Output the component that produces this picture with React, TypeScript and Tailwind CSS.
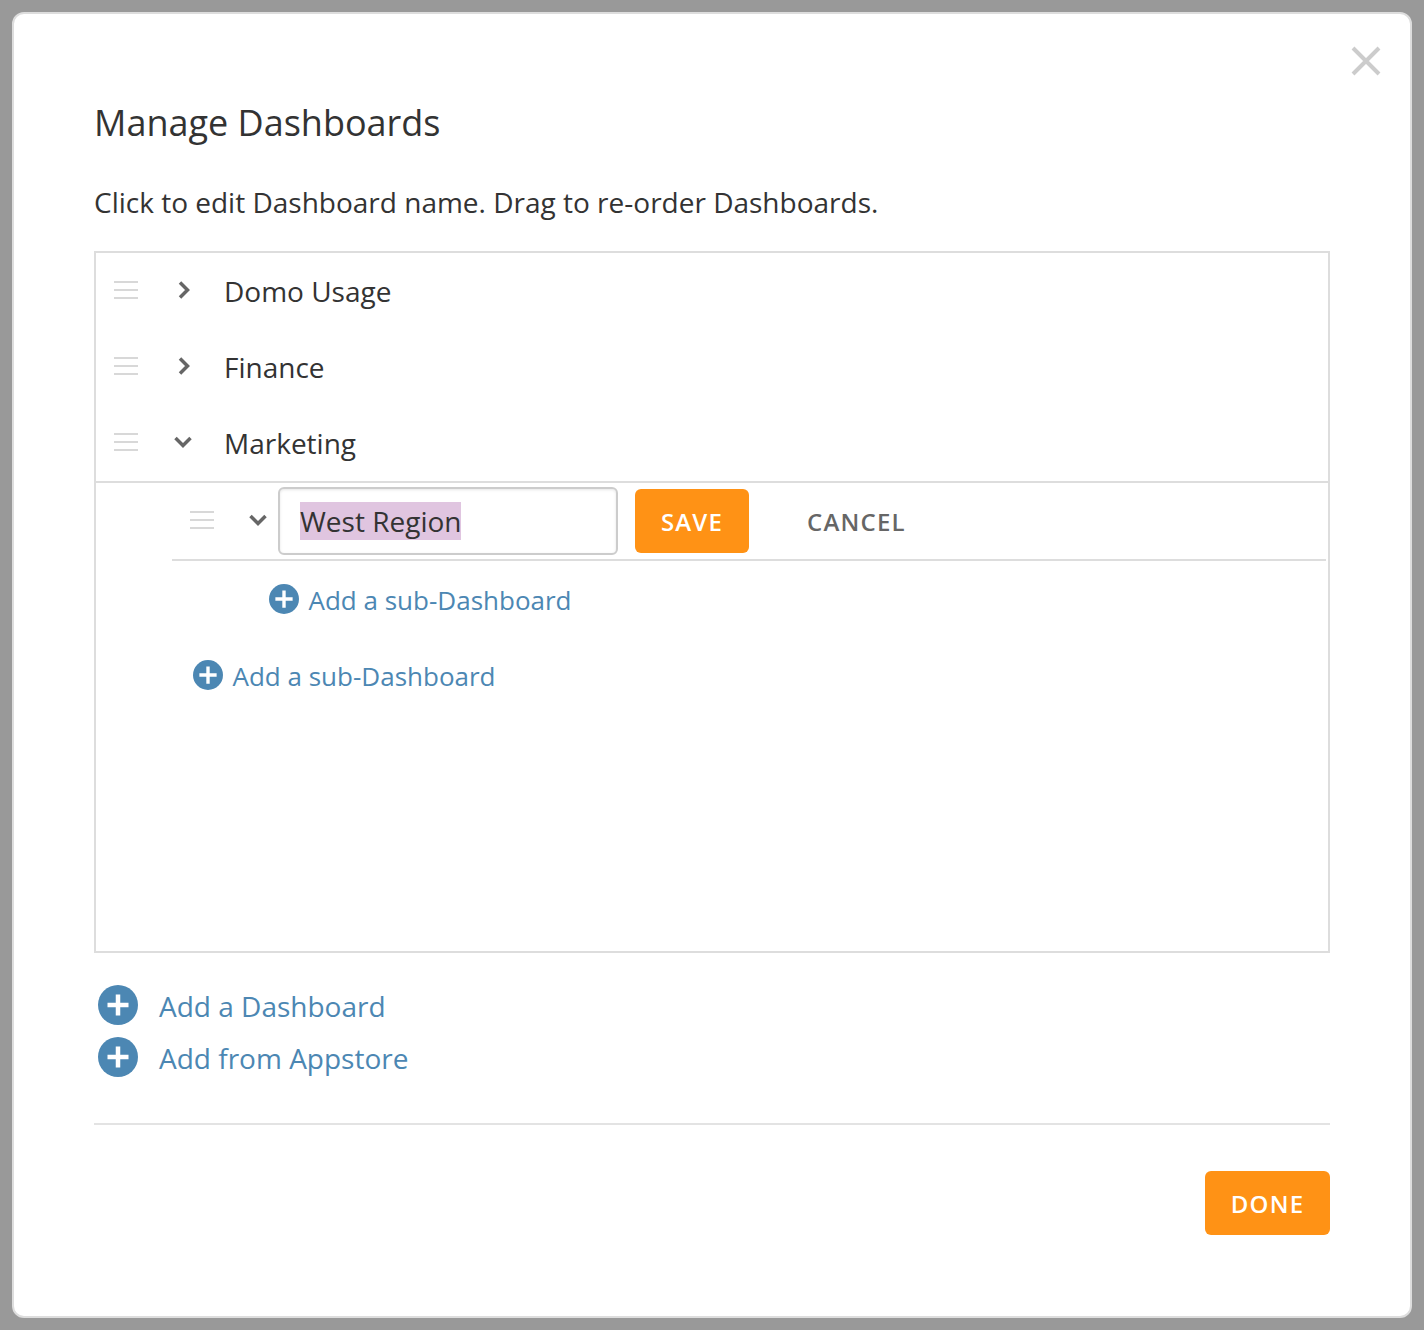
const font = { fontFamily: '"Open Sans", sans-serif' };

function Handle() {
  return (
    <div className="flex w-6 flex-col gap-1.5">
      <div className="h-0.5 bg-[#d8d8d8]" />
      <div className="h-0.5 bg-[#d8d8d8]" />
      <div className="h-0.5 bg-[#d8d8d8]" />
    </div>
  );
}

function Chevron({ open }: { open?: boolean }) {
  return (
    <svg width="24" height="24" viewBox="0 0 24 24" fill="none" stroke="#666" strokeWidth="3.500" className="shrink-0">
      {open ? <path d="M4.500 8l7.500 7.500 7.500-7.500" /> : <path d="M8 4.500l7.500 7.500-7.500 7.500" />}
    </svg>
  );
}

function Plus({ size }: { size: number }) {
  const arm = size === 30 ? 11.5 : 10.5;
  return (
    <svg width={size} height={size} viewBox="0 0 40 40" className="shrink-0">
      <circle cx="20" cy="20" r="20" fill="#4c87b3" />
      <path d={`M20 ${20 - arm}v${arm * 2}M${20 - arm} 20h${arm * 2}`} stroke="#fff" strokeWidth="4.500" />
    </svg>
  );
}

function Row({ name }: { name: string }) {
  const open = name === "Marketing";
  return (
    <div className="flex h-[76px] items-center pl-[18px] pb-0.5">
      <Handle />
      <div className={open ? "ml-[33px]" : "ml-[34px]"}>
        <Chevron open={open} />
      </div>
      <span className={open ? "ml-[29px] pt-0.5 text-[28px] text-[#333]" : "ml-[28px] pt-0.5 text-[28px] text-[#333]"}>
        {name}
      </span>
    </div>
  );
}

function SubLink({ className }: { className: string }) {
  return (
    <div className={`flex h-[76px] items-center gap-[9.500px] ${className}`}>
      <Plus size={30} />
      <span className="pt-[3px] text-[26px] text-[#4c87b3]">Add a sub-Dashboard</span>
    </div>
  );
}

function AddLink({ label }: { label: string }) {
  return (
    <div className="flex h-[52px] items-center pl-1">
      <Plus size={40} />
      <span className="ml-[21px] pt-0.5 text-[28px] text-[#4c87b3]">{label}</span>
    </div>
  );
}

export default function App() {
  return (
    <div className="h-[1330px] w-[1424px] overflow-hidden bg-[#999] p-3" style={font}>
      <div className="relative h-[1306px] w-[1400px] rounded-xl border-2 border-[#ddd] bg-white px-20">
        <button className="absolute top-[31px] right-[28px] text-[#ccc]">
          <svg width="32" height="32" viewBox="0 0 32 32" stroke="currentColor" strokeWidth="4" fill="none" className="block">
            <path d="M3 3l26 26M29 3L3 29" />
          </svg>
        </button>
        <h1 className="pt-[84px] text-[36px] leading-[50px] text-[#333]">Manage Dashboards</h1>
        <p className="mt-[34px] text-[28px] leading-[40px] text-[#333]">
          Click to edit Dashboard name. Drag to re-order Dashboards.
        </p>
        <div className="mt-[29px] h-[702px] border-2 border-[#ddd]">
          <Row name="Domo Usage" />
          <Row name="Finance" />
          <Row name="Marketing" />
          <div className="border-t-2 border-[#ddd] pl-[76px] pr-0.5">
            <div className="flex h-[78px] items-center border-b-2 border-[#ddd] pl-[18px]">
              <div className="pb-0.5">
                <Handle />
              </div>
              <div className="ml-[32px] pb-0.5">
                <Chevron open />
              </div>
              <div className="ml-[8px] flex h-[68px] w-[340px] items-center rounded-md border-2 border-[#ccc] pl-5 shadow-[inset_0_1px_3px_rgba(0,0,0,0.1)]">
                <span className="bg-[#e0c5e0] text-[28px] leading-[38px] text-[#333]">West Region</span>
              </div>
              <button className="ml-[17px] h-16 w-[114px] rounded-md bg-[#ff9215] pt-px text-[24px] font-semibold tracking-[1.200px] text-white">
                SAVE
              </button>
              <button className="ml-[58px] pt-px text-[24px] font-semibold tracking-[1.200px] text-[#666]">CANCEL</button>
            </div>
            <SubLink className="pl-[97px]" />
            <SubLink className="pl-[21px]" />
          </div>
        </div>
        <div className="mt-[26px]">
          <AddLink label="Add a Dashboard" />
          <AddLink label="Add from Appstore" />
        </div>
        <div className="mt-[40px] border-t-2 border-[#e3e3e3]" />
        <div className="mt-[46px] flex justify-end">
          <button className="h-16 w-[125px] rounded-md bg-[#ff9215] pt-px text-[24px] font-semibold tracking-[1.200px] text-white">DONE</button>
        </div>
      </div>
    </div>
  );
}
